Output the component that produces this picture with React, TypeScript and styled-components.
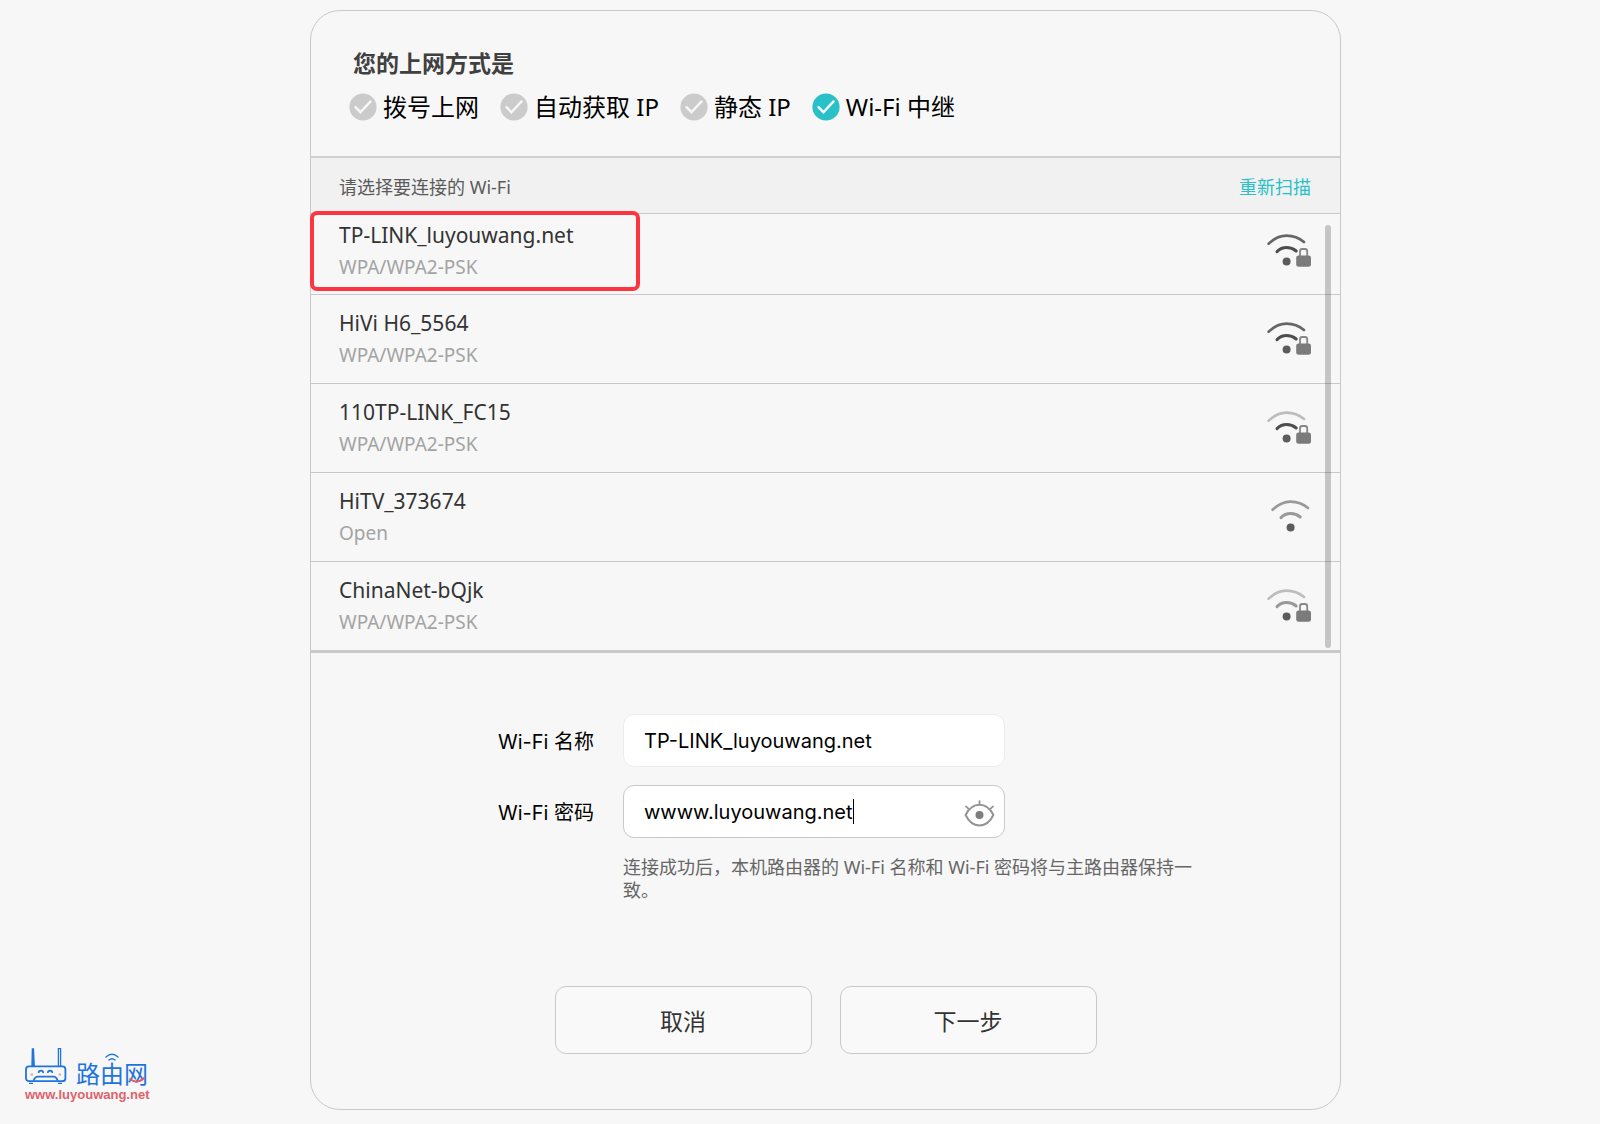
import React, { useState } from "react";
import styled, { createGlobalStyle } from "styled-components";

const uiFont = `"Noto Sans", "Noto Sans CJK SC", sans-serif`;
const fieldFont = `Inter, "Noto Sans CJK SC", sans-serif`;
const line = "#c9c9c9";
const accent = "#29c0c7";

const GlobalStyle = createGlobalStyle`
  * { box-sizing: border-box; }
  body {
    margin: 0;
    background: #f7f7f7;
    color: #000;
    font-family: ${uiFont};
  }
`;

const Page = styled.main`
  display: flex;
  justify-content: center;
  min-height: 100vh;
  padding: 10px 0 14px 51px;
`;

const Card = styled.section`
  width: 100%;
  max-width: 1031px;
  border: 1px solid ${line};
  border-radius: 30px;
  background: #f7f7f7;
`;

const ModeSection = styled.fieldset`
  margin: 0;
  border: 0;
  padding: 35px 38px 31px;
  border-bottom: 2px solid #d0d0d0;
`;

const Title = styled.legend`
  float: left;
  width: 100%;
  padding: 0 4px;
  font-size: 23px;
  line-height: 34px;
  font-weight: 700;
  color: #404040;
`;

const ModeList = styled.div`
  clear: both;
  display: flex;
  flex-wrap: wrap;
  gap: 21px;
  padding-top: 9px;
`;

const Mode = styled.label`
  display: flex;
  align-items: center;
  gap: 6px;
  font-size: 24px;
  line-height: 36px;
  cursor: pointer;
`;

const HiddenRadio = styled.input`
  appearance: none;
  position: absolute;
  width: 28px;
  height: 28px;
  margin: 0;
`;

const ScanBar = styled.header`
  display: flex;
  justify-content: space-between;
  align-items: center;
  height: 56px;
  padding: 0 29px 0 28px;
  background: #f1f1f1;
  border-bottom: 1px solid ${line};
  font-size: 18px;
  color: #5a5a5a;
`;

const Rescan = styled.button`
  border: 0;
  padding: 0;
  background: none;
  font: inherit;
  color: ${accent};
  cursor: pointer;
`;

const ListArea = styled.div`
  position: relative;
  border-bottom: 3px solid ${line};
`;

const Networks = styled.ul`
  margin: 0;
  padding: 0;
  list-style: none;
`;

const NetworkItem = styled.li`
  & + & { border-top: 1px solid ${line}; }
  &:first-child > button { padding: 5px 29px 11px 28px; }
`;

const NetworkRow = styled.button`
  display: flex;
  justify-content: space-between;
  align-items: flex-start;
  width: 100%;
  border: 0;
  padding: 12px 29px 12px 28px;
  background: none;
  text-align: left;
  font-family: inherit;
  cursor: pointer;
`;

const NetworkText = styled.span`
  display: flex;
  flex-direction: column;
`;

const Ssid = styled.span`
  font-size: 21px;
  line-height: 33px;
  color: #333;
`;

const Security = styled.span`
  font-size: 19px;
  line-height: 31px;
  color: #a3a3a3;
`;

const SignalBox = styled.span`
  display: flex;
  padding-top: 13px;
`;

const ScrollThumb = styled.div`
  position: absolute;
  top: 11px;
  right: 9px;
  bottom: 2px;
  width: 6px;
  border-radius: 3px;
  background: rgba(0, 0, 0, 0.2);
`;

const Highlight = styled.div`
  position: absolute;
  top: -3px;
  left: -1px;
  width: 330px;
  height: 80px;
  border: 4px solid #fd3540;
  border-radius: 7px;
  pointer-events: none;
`;

const JoinForm = styled.form`
  padding: 61px 0 55px;
`;

const Fields = styled.div`
  display: grid;
  grid-template-columns: 98px minmax(0, 1fr);
  column-gap: 27px;
  row-gap: 18px;
  align-items: center;
  padding: 0 144px 0 187px;
`;

const FieldLabel = styled.label`
  font-family: ${fieldFont};
  font-size: 20px;
  white-space: nowrap;
`;

const Field = styled.div<{ $active?: boolean }>`
  display: flex;
  align-items: center;
  width: 382px;
  max-width: 100%;
  height: 53px;
  padding: 0 9px 0 20px;
  border: 1px solid ${(p) => (p.$active ? line : "#ececec")};
  border-radius: 11px;
  background: #fff;
`;

const TextInput = styled.input<{ $hug?: boolean }>`
  ${(p) => (p.$hug ? "field-sizing: content;" : "flex: 1;")}
  min-width: 0;
  border: 0;
  padding: 0;
  outline: 0;
  background: none;
  font-family: ${fieldFont};
  font-size: 20px;
  line-height: 28px;
  color: #000;
  caret-color: transparent;
`;

const Caret = styled.span`
  width: 1px;
  height: 25px;
  background: #000;
`;

const EyeButton = styled.button`
  display: flex;
  margin-left: auto;
  border: 0;
  padding: 4px 0 0;
  background: none;
  cursor: pointer;
`;

const Hint = styled.p`
  grid-column: 2;
  margin: 0;
  font-size: 18px;
  line-height: 23px;
  color: #666;
`;

const Actions = styled.div`
  display: flex;
  justify-content: center;
  gap: 28px;
  padding-top: 84px;
`;

const ActionButton = styled.button`
  width: 257px;
  height: 68px;
  border: 1px solid ${line};
  border-radius: 11px;
  background: #f9f9f9;
  font-family: inherit;
  font-size: 23px;
  color: #333;
  cursor: pointer;
`;

const Brand = styled.a`
  position: absolute;
  left: 25px;
  top: 1046px;
  display: flex;
  flex-direction: column;
  text-decoration: none;
`;

const BrandTop = styled.span`
  display: flex;
  gap: 9px;
  height: 40px;
`;

const BrandName = styled.span`
  position: relative;
  padding-top: 15px;
  font-size: 24px;
  line-height: 26px;
  color: #1f74dc;
`;

const BrandMarks = styled.svg`
  position: absolute;
  left: 0;
  top: 0;
`;

const BrandUrl = styled.span`
  font-family: "Liberation Sans", Arial, sans-serif;
  font-size: 13px;
  line-height: 18px;
  font-weight: 700;
  color: #dd626c;
`;

function CheckMark({ on }: { on: boolean }) {
  return (
    <svg width="28" height="28" viewBox="0 0 28 28" aria-hidden="true">
      <circle cx="14" cy="14" r="13.6" fill={on ? accent : "#cbcbcb"} />
      <path
        d="M6.5 14.2 L11.4 19.2 L21.6 8.4"
        fill="none"
        stroke="#fff"
        strokeOpacity={on ? 0.95 : 0.85}
        strokeWidth="2.4"
        strokeLinecap="round"
      />
    </svg>
  );
}

type Tone = "strong" | "mid" | "weak";
const tones: Record<Tone, string> = { strong: "#4d4d4d", mid: "#999", weak: "#bdbdbd" };

function Signal({ outer, inner, locked }: { outer: Tone; inner: Tone; locked: boolean }) {
  const shift = locked ? 0 : 4;
  return (
    <svg width="44" height="36" viewBox="0 0 44 36" aria-hidden="true">
      <g transform={`translate(${shift} 0)`} fill="none" strokeLinecap="round">
        <path d="M1.6 11.8 Q10 3.6 19.6 3.6 Q29.5 3.6 37 10" stroke={outer === "strong" ? "#666" : tones[outer]} strokeWidth="2.6" />
        <path d="M10 19.6 Q14 15.6 19.6 15.6 Q25 15.6 29.2 19" stroke={tones[inner]} strokeWidth="3" />
        <circle cx="19.6" cy="29.6" r="4" fill="#5c5c5c" />
      </g>
      {locked && (
        <g>
          <path d="M33 24 V19.4 Q33 17 35.2 17 H38 Q40.2 17 40.2 19.4 V24" fill="#f7f7f7" stroke="#888" strokeWidth="1.8" />
          <rect x="29.2" y="23.4" width="14.8" height="11.4" rx="2.4" fill="#7b7b7b" />
        </g>
      )}
    </svg>
  );
}

function EyeIcon() {
  return (
    <svg width="31" height="28" viewBox="0 0 31 28" fill="none" stroke="#949494" strokeLinecap="round" aria-hidden="true">
      <path d="M1.6 15 Q6.6 4.8 15.5 4.8 Q24.4 4.8 29.4 15 Q24.4 25.4 15.5 25.4 Q6.6 25.4 1.6 15 Z" strokeWidth="2" strokeLinejoin="round" />
      <path d="M15.5 4 V1.2 M4.4 8.6 L2 6.4 M26.6 8.6 L29 6.4" strokeWidth="1.8" />
      <circle cx="15.5" cy="15" r="4" fill="#7d7d7d" stroke="none" />
    </svg>
  );
}

function RouterIcon() {
  return (
    <svg width="42" height="40" viewBox="0 0 42 40" fill="none" stroke="#1f74dc" aria-hidden="true">
      <path d="M7 20 L7.4 3 H8.4 L9.2 20 Z" strokeWidth="1.4" fill="#1f74dc" />
      <path d="M33.4 20 V2.6 H35.6 V20" strokeWidth="1.3" />
      <rect x="1" y="20.4" width="39.4" height="14.8" rx="3" strokeWidth="1.8" />
      <path d="M13.6 27 Q13.6 24.6 16 24.6 Q18.2 24.6 18.2 27 M22.8 27 Q22.8 24.6 25 24.6 Q27.4 24.6 27.4 27" strokeWidth="1.6" />
      <path d="M8.6 34.6 Q10 30.6 13 30.6 H28.4 Q31.4 30.6 32.6 34.6" strokeWidth="1.8" />
      <path d="M4 37.4 H8 M33 37.4 H37" strokeWidth="1.4" />
      <path d="M5.6 28.4 H8 M33.6 28.4 H36" stroke="#e9a0a8" strokeWidth="2" />
    </svg>
  );
}

const modes = ["拨号上网", "自动获取 IP", "静态 IP", "Wi-Fi 中继"];

interface Network {
  ssid: string;
  security: string;
  outer: Tone;
  inner: Tone;
}

const networks: Network[] = [
  { ssid: "TP-LINK_luyouwang.net", security: "WPA/WPA2-PSK", outer: "strong", inner: "strong" },
  { ssid: "HiVi H6_5564", security: "WPA/WPA2-PSK", outer: "strong", inner: "strong" },
  { ssid: "110TP-LINK_FC15", security: "WPA/WPA2-PSK", outer: "weak", inner: "strong" },
  { ssid: "HiTV_373674", security: "Open", outer: "mid", inner: "mid" },
  { ssid: "ChinaNet-bQjk", security: "WPA/WPA2-PSK", outer: "weak", inner: "mid" },
];

export default function App() {
  const [mode, setMode] = useState(modes[3]);
  const [ssid, setSsid] = useState(networks[0].ssid);
  const [password, setPassword] = useState("wwww.luyouwang.net");
  const [visible, setVisible] = useState(true);

  return (
    <>
      <GlobalStyle />
      <Page>
        <Card>
          <ModeSection>
            <Title>您的上网方式是</Title>
            <ModeList>
              {modes.map((m) => (
                <Mode key={m}>
                  <HiddenRadio type="radio" name="mode" checked={mode === m} onChange={() => setMode(m)} />
                  <CheckMark on={mode === m} />
                  {m}
                </Mode>
              ))}
            </ModeList>
          </ModeSection>
          <ScanBar>
            <span>请选择要连接的 Wi-Fi</span>
            <Rescan type="button">重新扫描</Rescan>
          </ScanBar>
          <ListArea>
            <Networks>
              {networks.map((n) => (
                <NetworkItem key={n.ssid}>
                  <NetworkRow type="button" onClick={() => setSsid(n.ssid)}>
                    <NetworkText>
                      <Ssid>{n.ssid}</Ssid>
                      <Security>{n.security}</Security>
                    </NetworkText>
                    <SignalBox>
                      <Signal outer={n.outer} inner={n.inner} locked={n.security !== "Open"} />
                    </SignalBox>
                  </NetworkRow>
                </NetworkItem>
              ))}
            </Networks>
            <ScrollThumb />
            <Highlight />
          </ListArea>
          <JoinForm onSubmit={(e) => e.preventDefault()}>
            <Fields>
              <FieldLabel htmlFor="wifi-name">Wi-Fi 名称</FieldLabel>
              <Field>
                <TextInput id="wifi-name" value={ssid} onChange={(e) => setSsid(e.target.value)} />
              </Field>
              <FieldLabel htmlFor="wifi-password">Wi-Fi 密码</FieldLabel>
              <Field $active>
                <TextInput
                  $hug
                  id="wifi-password"
                  type={visible ? "text" : "password"}
                  value={password}
                  onChange={(e) => setPassword(e.target.value)}
                />
                <Caret />
                <EyeButton type="button" aria-label="显示密码" onClick={() => setVisible(!visible)}>
                  <EyeIcon />
                </EyeButton>
              </Field>
              <Hint>连接成功后，本机路由器的 Wi-Fi 名称和 Wi-Fi 密码将与主路由器保持一致。</Hint>
            </Fields>
            <Actions>
              <ActionButton type="button">取消</ActionButton>
              <ActionButton type="submit">下一步</ActionButton>
            </Actions>
          </JoinForm>
        </Card>
      </Page>
      <Brand href="#">
        <BrandTop>
          <RouterIcon />
          <BrandName>
            路由网
            <BrandMarks width="74" height="40" viewBox="0 0 74 40" fill="none" strokeLinecap="round" aria-hidden="true">
              <path d="M30 11 Q36 5.6 42 11 M33 14 Q36 11.4 39 14" stroke="#1f74dc" strokeWidth="1.4" />
              <path d="M54 33 Q61 38.6 68 32" stroke="#e05a68" strokeWidth="1.8" />
            </BrandMarks>
          </BrandName>
        </BrandTop>
        <BrandUrl>www.luyouwang.net</BrandUrl>
      </Brand>
    </>
  );
}
